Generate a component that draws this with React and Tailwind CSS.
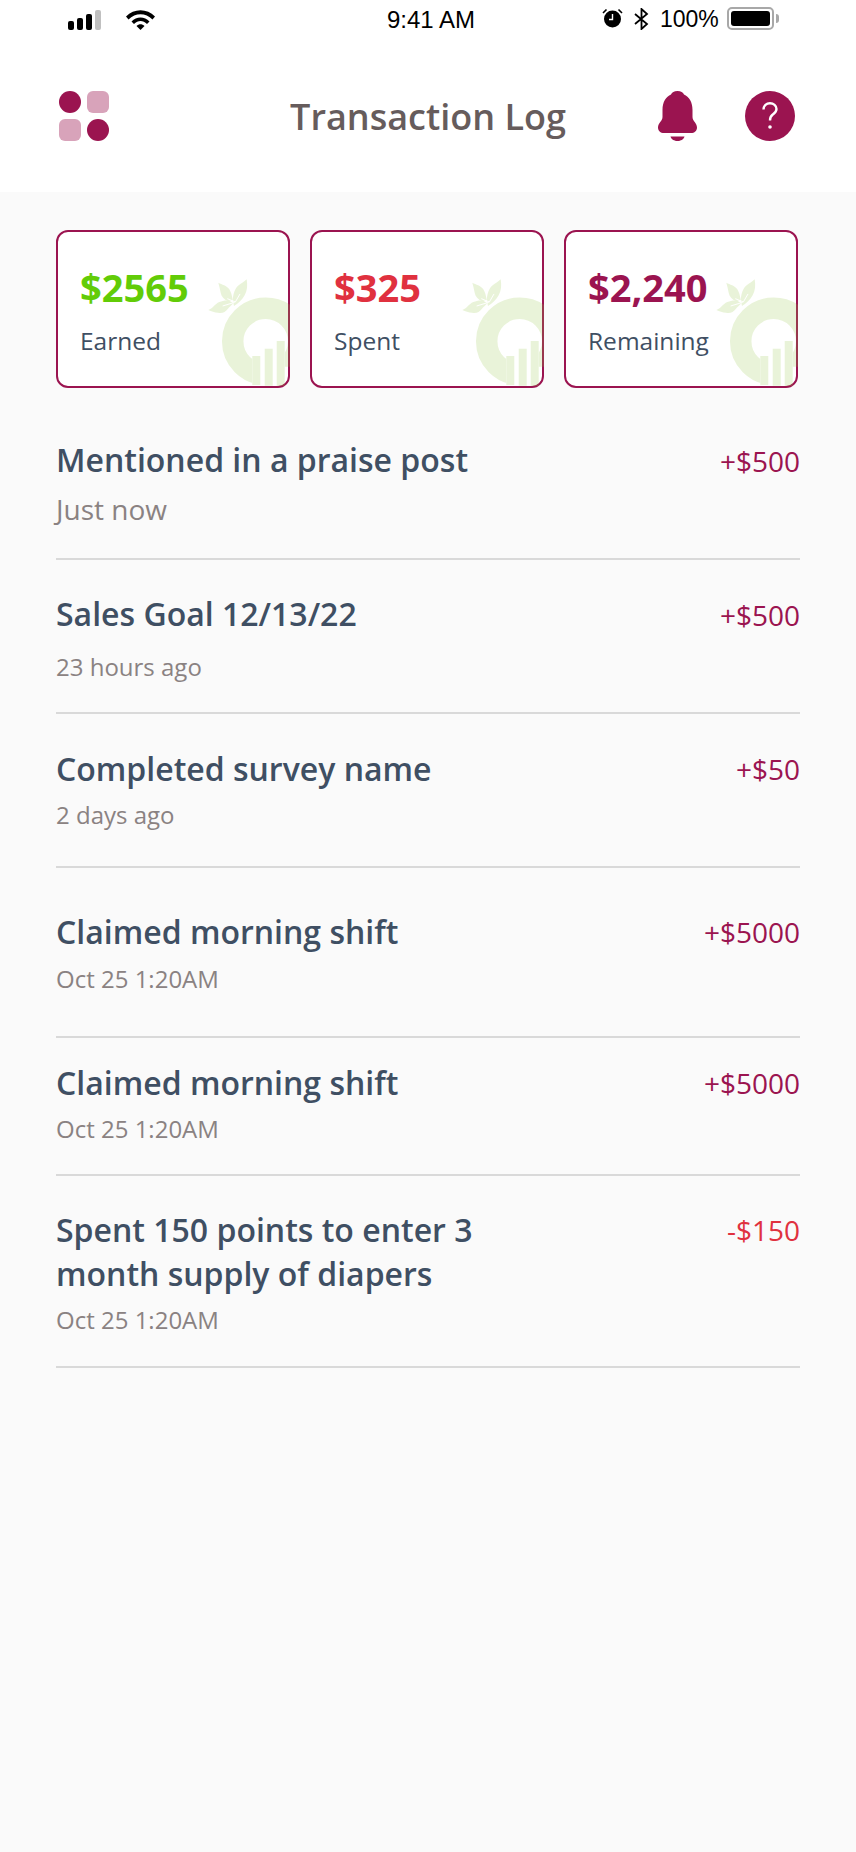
import React from 'react';

const rows = [
  { title: 'Mentioned in a praise post', time: 'Just now', amount: '+$500', cls: 'h-[172px] pt-[50px]', timeCls: 'mt-[11px] text-[28px] text-[#8a8282]', amountCls: 'mt-[1px]' },
  { title: 'Sales Goal 12/13/22', time: '23 hours ago', amount: '+$500', cls: 'h-[154px] pt-[32px]', timeCls: 'mt-[15px] text-[24px] text-[#8a8282]', amountCls: 'mt-[1px]' },
  { title: 'Completed survey name', time: '2 days ago', amount: '+$50', cls: 'h-[154px] pt-[33px]', timeCls: 'mt-[8px] text-[24px] text-[#8a8282]' },
  { title: 'Claimed morning shift', time: 'Oct 25 1:20AM', amount: '+$5000', cls: 'h-[170px] pt-[42px]', timeCls: 'mt-[9px] text-[24px] text-[#8a8282]' },
  { title: 'Claimed morning shift', time: 'Oct 25 1:20AM', amount: '+$5000', cls: 'h-[138px] pt-[23px]', timeCls: 'mt-[8px] text-[24px] text-[#8a8282]' },
  { title: 'Spent 150 points to enter 3 month supply of diapers', time: 'Oct 25 1:20AM', amount: '-$150', negative: true, cls: 'h-[192px] pt-[32px]', timeCls: 'mt-[8px] text-[24px] text-[#8a8282]' },
];

const cards = [
  { id: 'earned', value: '$2565', label: 'Earned', color: 'text-[#62cc07]' },
  { id: 'spent', value: '$325', label: 'Spent', color: 'text-[#e0313f]' },
  { id: 'remaining', value: '$2,240', label: 'Remaining', color: 'text-[#9b1450]' },
];

// sits over the card border, so it is see-through rather than a flat tint
function Watermark({ id }) {
  return (
    <svg className="absolute left-[-2px] top-[-2px]" width="234" height="158" viewBox="0 0 234 158">
      <defs>
        <clipPath id={`card-${id}`}>
          <rect x="0" y="0" width="234" height="158" rx="12" />
        </clipPath>
        <clipPath id={`ring-${id}`}>
          <path d="M0 0 H234 V136.7 H228.7 V110 H196.3 V158 H0Z" />
        </clipPath>
      </defs>
      <g clipPath={`url(#card-${id})`}>
        <g opacity="0.2" fill="#91c341">
          <g clipPath={`url(#ring-${id})`}>
            <circle cx="209.7" cy="111.3" r="33" fill="none" stroke="#91c341" strokeWidth="21.5" />
          </g>
          <rect x="196.3" y="126" width="8" height="29" />
          <rect x="208.7" y="118.7" width="8" height="37" />
          <rect x="220.7" y="111" width="8" height="45" />
          <g transform="translate(144 40) scale(0.3333)">
            <path d="M55 38 C66 44 80 46 88 58 C93 66 96 76 98 90 L84 94 C72 88 64 80 62 68 C60 58 58 48 55 38Z" />
            <path d="M140 28 C143 46 142 62 134 76 C126 90 116 100 102 108 L98 90 C100 72 104 56 116 46 C124 40 132 36 140 28Z" />
            <path d="M25 120 C38 116 44 102 58 96 C68 92 78 90 88 92 L100 100 C92 108 88 112 84 116 C76 126 66 132 54 128 C44 128 34 124 25 120Z" />
          </g>
        </g>
        <g transform="translate(144 40) scale(0.3333)" stroke="#fff" strokeWidth="3" fill="none">
          <path d="M82 86 L106 96 L120 72" />
          <path d="M68 108 L104 97" />
        </g>
      </g>
    </svg>
  );
}

function StatusBar() {
  return (
    <div className="relative h-[40px] font-['Liberation_Sans',sans-serif] text-black">
      <div className="absolute left-[68px] top-[10px] flex items-end gap-[3px] h-[20px]">
        <span className="w-[6px] h-[9px] rounded-[2px] bg-black" />
        <span className="w-[6px] h-[12px] rounded-[2px] bg-black" />
        <span className="w-[6px] h-[16px] rounded-[2px] bg-black" />
        <span className="w-[6px] h-[20px] rounded-[2px] bg-[#c0c0c0]" />
      </div>
      <svg className="absolute left-[126px] top-[10px]" width="29" height="20" viewBox="0 0 29 20">
        <path d="M0 6.5 C8 -2 21 -2 29 6.5 L26.5 9.5 C19.5 2.5 9.5 2.5 2.5 9.5Z" fill="#000" />
        <path d="M5.5 11.5 C10.5 6 18.5 6 23.5 11.5 L21 14 C17 10 12 10 8 14Z" fill="#000" />
        <path d="M10.5 16 C13 13.5 16 13.5 18.5 16 L14.5 20Z" fill="#000" />
      </svg>
      <div className="absolute left-[6px] right-0 top-[5px] text-center text-[24px] leading-[30px]">9:41 AM</div>
      <svg className="absolute left-[602px] top-[8px]" width="21" height="20" viewBox="0 0 21 20">
        <circle cx="10.5" cy="11" r="8.5" fill="#000" />
        <path d="M10.5 6 V11.5 H7" stroke="#fff" strokeWidth="1.4" fill="none" />
        <path d="M1 5 L4.5 1.5 M20 5 L16.5 1.5" stroke="#000" strokeWidth="1.6" />
      </svg>
      <svg className="absolute left-[634px] top-[8px]" width="15" height="22" viewBox="0 0 15 22">
        <path d="M1 6 L13 16 L7.5 21 V1 L13 6 L1 16" stroke="#000" strokeWidth="1.8" fill="none" />
      </svg>
      <div className="absolute left-[660px] top-[4px] text-[23px] leading-[30px]">100%</div>
      <div className="absolute left-[727px] top-[7px] w-[47px] h-[23px] rounded-[5px] border-2 border-[#a8a8a8] p-[2px]">
        <div className="h-full rounded-[3px] bg-black" />
      </div>
      <div className="absolute left-[776px] top-[14px] w-[3px] h-[9px] rounded-r-full bg-[#a8a8a8]" />
    </div>
  );
}

export default function App() {
  return (
    <div className="min-h-[1852px] bg-[#fafafa] font-['Open_Sans',sans-serif]">
      <div className="h-[192px] bg-white">
        <StatusBar />
        <div className="grid grid-cols-[1fr_auto_1fr] items-start pl-[59px] pr-[61px] pt-[51px]">
          <div className="grid grid-cols-[22px_22px] gap-[6px] justify-start">
            <span className="h-[22px] rounded-full bg-[#9b1450]" />
            <span className="h-[22px] rounded-[6px] bg-[#d8a3ba]" />
            <span className="h-[22px] rounded-[6px] bg-[#d8a3ba]" />
            <span className="h-[22px] rounded-full bg-[#9b1450]" />
          </div>
          <div className="ml-[2px] pt-[1px] text-[36px] leading-[50px] font-semibold text-[#665c5c]">Transaction Log</div>
          <div className="flex items-start justify-end gap-[48px]">
            <svg width="39" height="50" viewBox="0 0 39 50">
              <path d="M19.5 0 C23 0 25 1.5 26 3.5 C31 5.5 34.5 11 34.5 19 L34.5 26 C34.5 30 39 32 39 36.5 C39 40 36.5 42 33 42 H6 C2.5 42 0 40 0 36.5 C0 32 4.5 30 4.5 26 L4.5 19 C4.5 11 8 5.5 13 3.5 C14 1.5 16 0 19.5 0Z" fill="#9b1450" />
              <path d="M12.5 45.5 H26.5 C25 51.5 14 51.5 12.5 45.5Z" fill="#9b1450" />
            </svg>
            <div className="w-[50px] h-[50px] rounded-full bg-[#9b1450] flex items-center justify-center">
              <svg width="16" height="28" viewBox="0 0 16 28" fill="none">
                <path d="M1.5 7.5 C1.5 3.5 4.5 1.3 8 1.3 C11.5 1.3 14.5 3.5 14.5 7 C14.5 10 12.5 11.2 10.5 12.8 C8.7 14.2 8 15.3 8 18.5" stroke="#fff" strokeWidth="2.4" />
                <circle cx="8" cy="25" r="1.8" fill="#fff" />
              </svg>
            </div>
          </div>
        </div>
      </div>

      <div className="pl-[56px] pr-[56px]">
        <div className="flex gap-[20px] pt-[38px] h-[196px]">
          {cards.map(c => (
            <div key={c.id} className="relative w-[234px] h-[158px] rounded-[12px] border-2 border-[#9b1450] bg-white pl-[22px] pt-[33px]">
              <Watermark id={c.id} />
              <div className={`relative text-[38px] leading-[44px] font-bold ${c.color}`}>{c.value}</div>
              <div className="relative mt-[15px] text-[24.5px] leading-[34px] text-[#3f4f63]">{c.label}</div>
            </div>
          ))}
        </div>

        <div>
          {rows.map((r, i) => (
            <div key={i} className={`flex items-start justify-between border-b-2 border-[#d9d9d9] ${r.cls}`}>
              <div className="w-[440px]">
                <div className="text-[32px] leading-[44px] font-semibold text-[#3f4f63]">{r.title}</div>
                <div className={`leading-[32px] ${r.timeCls}`}>{r.time}</div>
              </div>
              <div className={`text-[28px] leading-[44px] ${r.amountCls || ''} ${r.negative ? 'text-[#e0313f]' : 'text-[#9b1450]'}`}>{r.amount}</div>
            </div>
          ))}
        </div>
      </div>
    </div>
  );
}
